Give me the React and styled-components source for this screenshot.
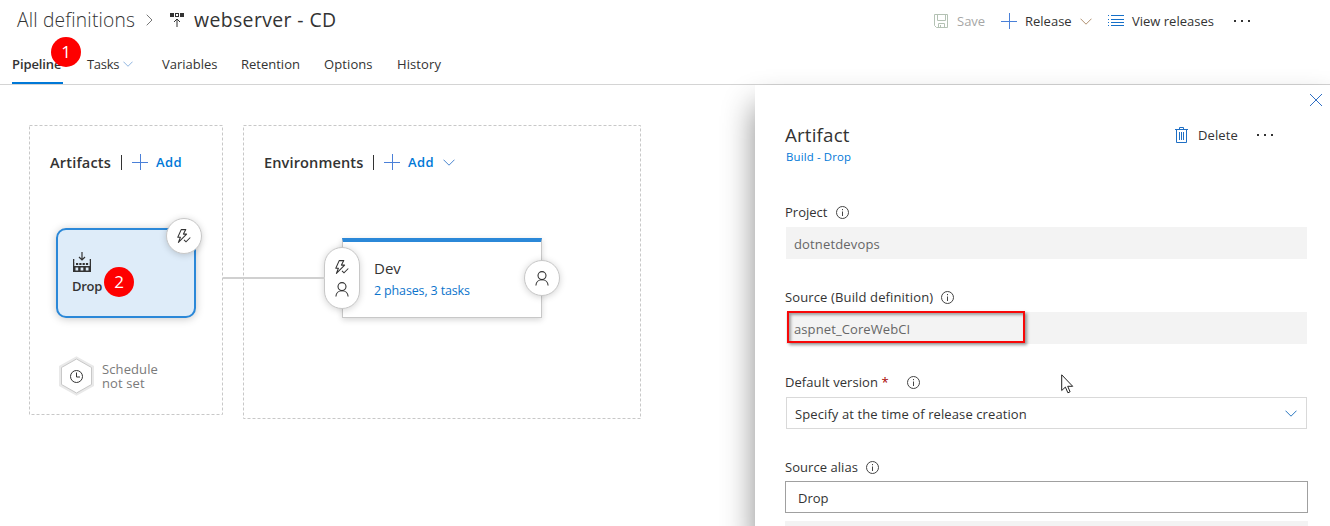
import React from "react";
import styled, { createGlobalStyle } from "styled-components";

const GlobalStyle = createGlobalStyle`
  * { box-sizing: border-box; }
  body {
    margin: 0;
    background: #fff;
    color: #333;
    font-family: "Open Sans", "Noto Sans", sans-serif;
    font-size: 13px;
    overflow: hidden;
  }
  svg { display: block; flex: none; }
`;

const Page = styled.div`
  position: relative;
  display: flex;
  flex-direction: column;
  width: 1330px;
  height: 526px;
  overflow: hidden;
`;

const Text = styled.span`
  display: block;
  flex: none;
  width: ${(p) => (p.$w ? `${p.$w}px` : "auto")};
  white-space: nowrap;
  font-size: ${(p) => p.$size || 13}px;
  line-height: ${(p) => p.$lh || 20}px;
  font-weight: ${(p) => p.$weight || 400};
  letter-spacing: ${(p) => p.$ls || 0}px;
  color: ${(p) => p.$color || "#333"};
`;

const Header = styled.header`
  height: 85px;
  flex: none;
  border-bottom: 1px solid #d4d4d4;
`;

const TitleRow = styled.div`
  display: flex;
  align-items: center;
  height: 40px;
  padding-left: 17px;
`;

const Breadcrumb = styled.div`
  display: flex;
  align-items: center;
  width: 917px;
`;

const Toolbar = styled.div`
  display: flex;
  align-items: center;
  height: 40px;
  padding-top: 2px;
`;

const Gap = styled.span`
  flex: none;
  width: ${(p) => p.$w || 0}px;
`;

const Tabs = styled.nav`
  display: flex;
  gap: 24px;
  padding-left: 12px;
  height: 44px;
`;

const Tab = styled.div`
  display: flex;
  align-items: center;
  gap: 5px;
  width: ${(p) => p.$w}px;
  height: 44px;
  padding-top: 5px;
  border-bottom: 2px solid ${(p) => (p.$active ? "#0078d7" : "transparent")};
`;

const Main = styled.main`
  position: relative;
  z-index: 1;
  display: flex;
  flex: 1;
`;

const Canvas = styled.section`
  display: flex;
  align-items: flex-start;
  gap: 20px;
  width: 755px;
  padding: 40px 0 0 29px;
`;

const Zone = styled.div`
  position: relative;
  width: ${(p) => p.$w}px;
  height: ${(p) => p.$h}px;
`;

const ZoneFrame = styled.svg`
  position: absolute;
  inset: 0;
`;

const ZoneHeader = styled.div`
  display: flex;
  align-items: center;
  height: 24px;
  margin: 25px 0 0 21px;
`;

const Divider = styled.span`
  width: 1px;
  height: 15px;
  background: #333;
  margin-right: 10px;
`;

const ArtifactCard = styled.div`
  position: relative;
  display: flex;
  flex-direction: column;
  width: 140px;
  height: 90px;
  margin: 54px 0 0 27px;
  padding: 22px 0 0 14px;
  border: 2px solid #2b88d8;
  border-radius: 10px;
  background: #deecf9;
  box-shadow: 0 1px 8px rgba(0, 0, 0, 0.22);
`;

const ArtifactIcon = styled.div`
  padding-left: 1px;
`;

const Knob = styled.div`
  position: absolute;
  left: ${(p) => p.$x}px;
  top: ${(p) => p.$y}px;
  display: flex;
  flex-direction: column;
  align-items: center;
  justify-content: center;
  gap: 7px;
  width: 36px;
  height: ${(p) => p.$h || 36}px;
  border: 1px solid #c8c8c8;
  border-radius: 18px;
  background: #fff;
  box-shadow: 0 1px 7px rgba(0, 0, 0, 0.18);
`;

const Schedule = styled.div`
  display: flex;
  align-items: center;
  gap: 8px;
  margin: 38px 0 0 30px;
`;

const EnvironmentCard = styled.div`
  position: relative;
  width: 200px;
  height: 80px;
  margin: 64px 0 0 99px;
  padding: 16px 0 0 31px;
  border: 1px solid #c8c8c8;
  border-top: 4px solid #2b88d8;
  background: #fff;
  box-shadow: 0 2px 6px rgba(0, 0, 0, 0.16);
`;

const Connector = styled.span`
  position: absolute;
  left: 223px;
  top: 192px;
  width: 102px;
  height: 2px;
  background: #d0d0d0;
`;

const Panel = styled.aside`
  position: relative;
  display: flex;
  flex-direction: column;
  width: 575px;
  padding: 8px 23px 0 30px;
  background: #fff;
  box-shadow: 0 20px 30px rgba(0, 0, 0, 0.46);
`;

const CloseRow = styled.div`
  display: flex;
  justify-content: flex-end;
  height: 31px;
  margin-right: -16px;
`;

const PanelHeader = styled.div`
  display: flex;
  align-items: center;
  justify-content: space-between;
  height: 22px;
  padding-right: 33px;
`;

const PanelActions = styled.div`
  display: flex;
  align-items: center;
`;

const Subtitle = styled.div`
  height: 56px;
  padding: 1px 0 0 1px;
`;

const Field = styled.div`
  height: 85px;
`;

const FieldLabel = styled.div`
  display: flex;
  align-items: center;
  height: 20px;
  margin-bottom: 5px;
`;

const Required = styled.span`
  color: #a80000;
`;

const FieldBox = styled.div`
  position: relative;
  display: flex;
  align-items: center;
  justify-content: space-between;
  width: ${(p) => (p.$kind === "input" ? 523 : 521)}px;
  height: 32px;
  margin-left: ${(p) => (p.$kind === "input" ? 0 : 1)}px;
  margin-top: ${(p) => (p.$kind === "input" ? -1 : 0)}px;
  padding: ${(p) => (p.$kind === "readonly" ? 2 : 1)}px 9px 0 ${(p) => (p.$kind === "input" ? 12 : 8)}px;
  background: ${(p) => (p.$kind === "readonly" ? "#f3f3f3" : "#fff")};
  border: ${(p) =>
    p.$kind === "readonly" ? "0" : p.$kind === "input" ? "1px solid #a0a0a0" : "1px solid #d9d9d9"};
`;

const NextField = styled.div`
  flex: none;
  width: 523px;
  height: 10px;
  margin-top: -21px;
  background: #f3f3f3;
`;

const Highlight = styled.span`
  position: absolute;
  left: 1px;
  top: -1px;
  width: 238px;
  height: 32px;
  border: 2px solid #f80808;
  box-shadow: 2px 2px 3px rgba(0, 0, 0, 0.4), inset 2px 2px 3px rgba(0, 0, 0, 0.35);
`;

const StepMarker = styled.span`
  position: absolute;
  z-index: 3;
  left: ${(p) => p.$x}px;
  top: ${(p) => p.$y}px;
  width: 30px;
  height: 30px;
  border-radius: 50%;
  background: #fe0000;
  color: #fff;
  text-align: center;
  font: 17px/30px "Open Sans", sans-serif;
`;

const Cursor = styled.svg`
  position: absolute;
  z-index: 3;
  left: 1061px;
  top: 374px;
`;

const Chevron = ({ color = "#4a86cf", w = 12, h = 7 }) => (
  <svg width={w} height={h} viewBox="0 0 12 7" fill="none" stroke={color}>
    <path d="M.5.7 6 6.2 11.5.7" />
  </svg>
);

const Plus = () => (
  <svg width="16" height="16" fill="none" stroke="#4a80d8">
    <path d="M8.5 0v16M0 8.5h16" />
  </svg>
);

const Dots = () => (
  <svg width="18" height="4" fill="#333">
    <path d="M1 1h2v2H1zM8 1h2v2H8zM15 1h2v2h-2z" />
  </svg>
);

const SaveIcon = () => (
  <svg width="14" height="14" fill="none" stroke="#b4c2b4">
    <path d="M.5.5h13v13h-11l-2-2zM3.5.5v6h8v-6M4.5 13.5v-4h6v4M6.5 13v-2" />
  </svg>
);

const ListIcon = () => (
  <svg width="16" height="12" fill="none" stroke="#1670c8">
    <path d="M3 .5h13M3 4.5h13M3 7.5h13M3 10.5h13" />
    <path d="M0 .5h1M0 4.5h1M0 7.5h1M0 10.5h1" />
  </svg>
);

const ReleaseIcon = () => (
  <svg width="16" height="15" fill="none">
    <path d="M1 0h4v4H1zM6 0h4v4H6zM11 0h4v4h-4z" fill="#333" />
    <path d="M7 1h2v2H7z" fill="#fff" />
    <path d="M8 14V6M5 9l3-3 3 3" stroke="#333" />
  </svg>
);

const BuildIcon = () => (
  <svg width="18" height="20" fill="none">
    <path d="M9 0v8M6 5l3 3 3-3" stroke="#333" strokeWidth="1.2" />
    <path d="M0 7h1.3v3h15.4V7H18v13H0z" fill="#333" />
    <path d="M1.3 9.5h15.4v4.500H1.300z" fill="#deecf9" />
    <path d="M3 11h2.200v2H3zM6.300 11h2.200v2H6.300zM9.600 11h2.200v2H9.600zM12.900 11h2.200v2h-2.200z" fill="#333" />
    <path d="M2.500 15.500h2.700v3H2.500zM7.600 15.500h2.700v3H7.600zM12.800 15.500h2.700v3h-2.700z" fill="#deecf9" />
  </svg>
);

const TriggerIcon = () => (
  <svg width="14" height="15" fill="none" stroke="#333" strokeWidth="1.05">
    <path d="M4.2.6h4.6L6.4 5.1h3.2L1.4 13.4l2-5.2H.8z" strokeLinejoin="round" />
    <path d="m7 10.8 2 2 4.3-4.3" />
  </svg>
);

const PersonIcon = () => (
  <svg width="14" height="15" fill="none" stroke="#333" strokeWidth="1.1">
    <circle cx="7" cy="4.6" r="4" />
    <path d="M.9 14.5C1 11 3.6 8.7 7 8.7s6 2.3 6.1 5.8" />
  </svg>
);

const HexClock = () => (
  <svg width="35" height="40" fill="none">
    <path d="M17.5 2 33.5 11v18L17.5 38 1.5 29V11z" stroke="#e9e9e9" strokeWidth="3" />
    <path d="M17.5 3 32.5 11.5v17L17.5 37 2.5 28.5v-17z" fill="#fff" stroke="#c8c8c8" />
    <circle cx="17.5" cy="20.5" r="6" stroke="#333" />
    <path d="M17.5 16.5v4.5h3.5" stroke="#333" />
  </svg>
);

const InfoIcon = () => (
  <svg width="14" height="14" fill="none" stroke="#444">
    <circle cx="7.5" cy="7.5" r="6" />
    <path d="M7.5 6.5v4.5M7.5 4v1.2" />
  </svg>
);

const TrashIcon = () => (
  <svg width="13" height="16" fill="none" stroke="#1f6fc4">
    <path d="M0 2.5h13M4.5 2.5v-2h4v2M1.5 2.5v13h10v-13M4.5 5v8M6.5 5v8M8.5 5v8" />
  </svg>
);

const CloseIcon = () => (
  <svg width="14" height="14" fill="none" stroke="#2f6fc4">
    <path d="m1 1 12 12M13 1 1 13" />
  </svg>
);

const tabs = [
  { name: "Pipeline", w: 51, active: true, ls: -0.1 },
  { name: "Tasks", w: 51, menu: true, ls: -0.3 },
  { name: "Variables", w: 55 },
  { name: "Retention", w: 59 },
  { name: "Options", w: 49, ls: 0.1 },
  { name: "History", w: 44, ls: 0.1 },
];

const LabelRow = ({ children, w, required, ls }) => (
  <FieldLabel>
    <Text $w={w} $ls={ls}>
      {children}
      {required && <Required> *</Required>}
    </Text>
    <InfoIcon />
  </FieldLabel>
);

export default function App() {
  return (
    <Page>
      <GlobalStyle />
      <Header>
        <TitleRow>
          <Breadcrumb>
            <Text $size={19.2} $lh={28} $w={129} $ls={0.2} $weight={300}>All definitions</Text>
            <svg width="7" height="12" fill="none" stroke="#777">
              <path d="m.7.7 5.3 5.3L.7 11.3" />
            </svg>
            <Gap $w={16} />
            <ReleaseIcon />
            <Gap $w={9} />
            <Text $size={19.4} $lh={28} $ls={0.4}>webserver - CD</Text>
          </Breadcrumb>
          <Toolbar>
            <SaveIcon />
            <Gap $w={9} />
            <Text $w={44} $color="#a6a6a6">Save</Text>
            <Plus />
            <Gap $w={8} />
            <Text $w={55}>Release</Text>
            <Chevron color="#b09070" />
            <Gap $w={16} />
            <ListIcon />
            <Gap $w={8} />
            <Text $w={101}>View releases</Text>
            <Dots />
          </Toolbar>
        </TitleRow>
        <Tabs>
          {tabs.map((t) => (
            <Tab key={t.name} $w={t.w} $active={t.active}>
              <Text $weight={t.active ? 600 : 400} $ls={t.ls} $w={t.menu ? 31 : undefined}>
                {t.name}
              </Text>
              {t.menu && <Chevron color="#7aa6da" w={10} h={6} />}
            </Tab>
          ))}
        </Tabs>
      </Header>
      <Main>
        <Canvas>
          <Zone $w={194} $h={290}>
            <ZoneFrame width="194" height="290" fill="none" stroke="#c8c8c8" strokeDasharray="3 2">
              <rect x=".5" y=".5" width="193" height="289" />
            </ZoneFrame>
            <ZoneHeader>
              <Text $size={14.6} $weight={600} $ls={0.15} $w={71}>Artifacts</Text>
              <Divider />
              <Plus />
              <Gap $w={8} />
              <Text $weight={600} $ls={0.4} $color="#0078d7">Add</Text>
            </ZoneHeader>
            <ArtifactCard>
              <ArtifactIcon>
                <BuildIcon />
              </ArtifactIcon>
              <Text $weight={600} $ls={-0.3} $lh={28}>Drop</Text>
              <Knob $x={108} $y={-12}>
                <TriggerIcon />
              </Knob>
            </ArtifactCard>
            <Schedule>
              <HexClock />
              <Text $lh={14} $ls={0.1} $color="#7a7a7a">
                Schedule
                <br />
                not set
              </Text>
            </Schedule>
          </Zone>
          <Zone $w={398} $h={294}>
            <ZoneFrame width="398" height="294" fill="none" stroke="#c8c8c8" strokeDasharray="3 2">
              <rect x=".5" y=".5" width="397" height="293" />
            </ZoneFrame>
            <ZoneHeader>
              <Text $size={14.6} $weight={600} $ls={0.1} $w={109}>Environments</Text>
              <Divider />
              <Plus />
              <Gap $w={8} />
              <Text $weight={600} $ls={0.4} $color="#0078d7" $w={35}>Add</Text>
              <Chevron />
            </ZoneHeader>
            <EnvironmentCard>
              <Text $size={15} $lh={20}>Dev</Text>
              <Text $size={12.5} $ls={-0.15} $lh={25} $color="#0c74cc">2 phases, 3 tasks</Text>
              <Knob $x={-19} $y={5} $h={62}>
                <TriggerIcon />
                <PersonIcon />
              </Knob>
              <Knob $x={181} $y={18}>
                <PersonIcon />
              </Knob>
            </EnvironmentCard>
          </Zone>
          <Connector />
        </Canvas>
        <Panel>
          <CloseRow>
            <CloseIcon />
          </CloseRow>
          <PanelHeader>
            <Text $size={18.8} $lh={22} $ls={0.15}>Artifact</Text>
            <PanelActions>
              <TrashIcon />
              <Gap $w={10} />
              <Text $w={58} $ls={0.1}>Delete</Text>
              <Dots />
            </PanelActions>
          </PanelHeader>
          <Subtitle>
            <Text $size={11.4} $ls={0.15} $color="#0078d7">Build - Drop</Text>
          </Subtitle>
          <Field>
            <LabelRow w={50}>Project</LabelRow>
            <FieldBox $kind="readonly">
              <Text $color="#666" $ls={0.15}>dotnetdevops</Text>
            </FieldBox>
          </Field>
          <Field>
            <LabelRow w={155} ls={0.13}>Source (Build definition)</LabelRow>
            <FieldBox $kind="readonly">
              <Text $color="#666" $ls={0.1}>aspnet_CoreWebCI</Text>
              <Highlight />
            </FieldBox>
          </Field>
          <Field>
            <LabelRow w={121} ls={0.07} required>Default version</LabelRow>
            <FieldBox $kind="select">
              <Text $ls={0.1}>Specify at the time of release creation</Text>
              <Chevron color="#2b78c0" />
            </FieldBox>
          </Field>
          <Field>
            <LabelRow w={80} ls={0.05}>Source alias</LabelRow>
            <FieldBox $kind="input">
              <Text>Drop</Text>
            </FieldBox>
          </Field>
          <NextField />
        </Panel>
      </Main>
      <StepMarker $x={51} $y={37}>1</StepMarker>
      <StepMarker $x={104} $y={267}>2</StepMarker>
      <Cursor width="13" height="20" viewBox="0 0 13 20">
        <path d="M.7.8v15.7l3.7-3.4 2.5 5.7 2.2-1-2.4-5.500h5z" fill="#fff" stroke="#222" />
      </Cursor>
    </Page>
  );
}
